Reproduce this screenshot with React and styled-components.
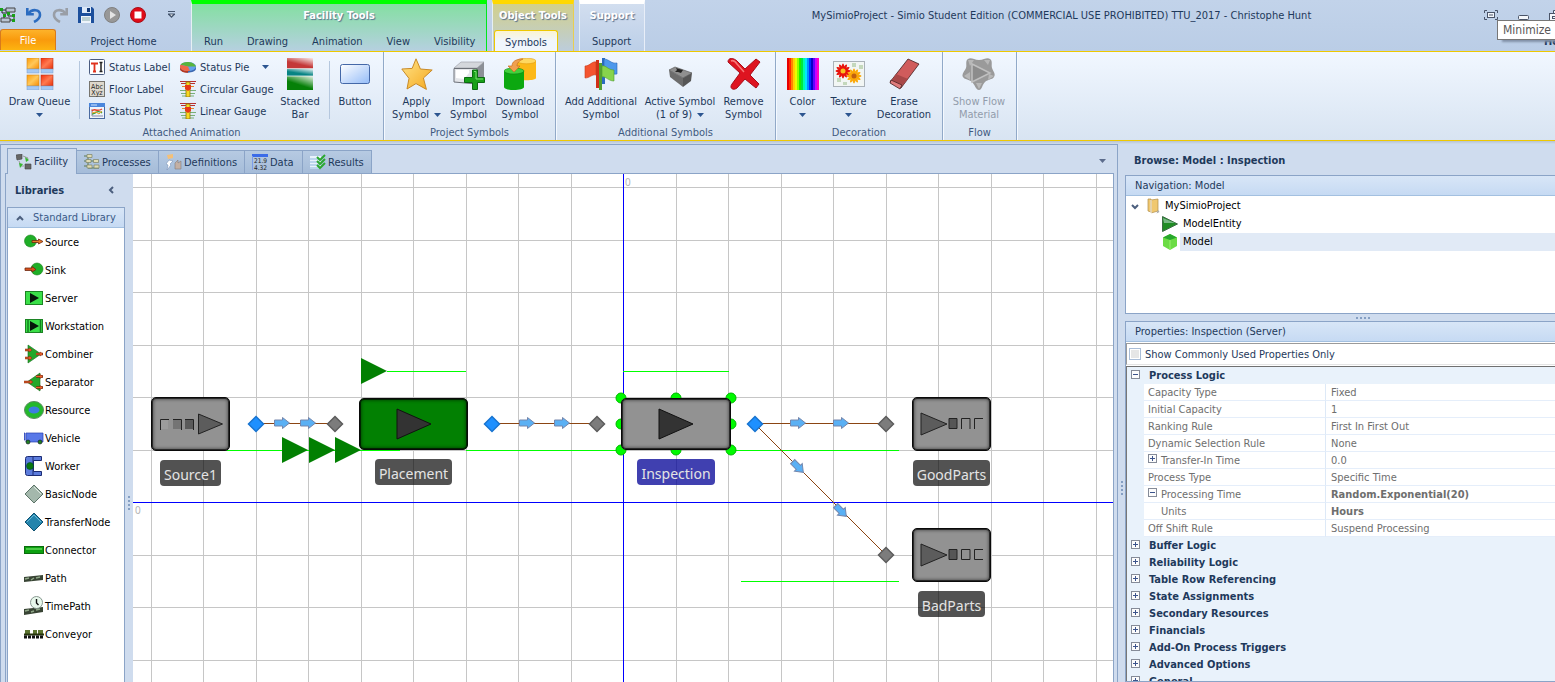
import React from 'react';
import styled, { createGlobalStyle, css } from 'styled-components';

const GlobalStyle = createGlobalStyle`
  * { box-sizing: border-box; }
  body {
    margin: 0;
    font: 11px/13px "DejaVu Sans Condensed", "DejaVu Sans", sans-serif;
    color: #1e395b;
    background: #cfdcee;
  }
  button, input { font: inherit; color: inherit; }
  button { border: 0; padding: 0; background: none; cursor: pointer; white-space: nowrap; }
  svg { display: block; flex: none; }
`;

const Window = styled.div`
  height: 100vh;
  display: flex;
  flex-direction: column;
  overflow: hidden;
  background: #cfdcee;
`;

/* ---------- Title bar and ribbon tabs ---------- */

const Header = styled.header`
  display: flex;
  flex: none;
  height: 52px;
  background: linear-gradient(#c2d3ea, #bacde6);
  border-bottom: 1px solid #eec800;
`;
const HomeBlock = styled.div`
  width: 191px;
  flex: none;
  display: flex;
  flex-direction: column;
`;
const QuickAccess = styled.div`
  display: flex;
  align-items: center;
  height: 30px;
  gap: 10px;
`;
const IconButton = styled.button`
  display: flex;
  align-items: center;
  justify-content: center;
  width: 16px;
  height: 16px;
`;
const MoreButton = styled(IconButton)`
  margin-left: 7px;
`;
const TabRow = styled.nav`
  display: flex;
  height: 22px;
  align-items: stretch;
`;
const RibbonTab = styled.button`
  padding: 4px 12px 0;
  color: #1e395b;
  margin-bottom: 1px;
`;
const FileTab = styled(RibbonTab)`
  width: 56px;
  padding: 1px 0 0;
  color: #fff;
  border: 1px solid #d87a1c;
  border-bottom: 0;
  border-radius: 3px 3px 0 0;
  background: linear-gradient(#fdb32a, #f99a0c 50%, #fdb410);
`;
const HomeTab = styled(RibbonTab)`
  flex: 1;
`;
const ActiveTab = styled(RibbonTab)`
  padding: 3px 10px 0;
  margin: 0 0 0 1px;
  border: 1px solid #eec800;
  border-bottom: 0;
  border-radius: 3px 3px 0 0;
  background: linear-gradient(#fbf4d0, #f0f6fd 50%);
`;
const ContextGroup = styled.div`
  flex: none;
  display: flex;
  flex-direction: column;
  margin-right: 5px;
  border-top: 4px solid ${(p) => p.$accent};
  border-left: 1px solid #e6f0f4;
  border-right: 1px solid ${(p) => p.$edge};
  background: linear-gradient(${(p) => p.$from}, ${(p) => p.$to});
  width: ${(p) => p.$width}px;
`;
const ContextTitle = styled.div`
  height: 26px;
  padding-top: 5px;
  text-align: center;
  font-weight: bold;
  color: #fff;
  text-shadow: 1px 1px 1px #56708e;
  white-space: nowrap;
`;
const WindowTitle = styled.h1`
  flex: 1;
  margin: 9px 0 0;
  font-size: 11px;
  font-weight: normal;
  text-align: center;
  white-space: nowrap;
  overflow: hidden;
`;
const Controls = styled.div`
  flex: none;
  position: relative;
  width: 82px;
  overflow: hidden;
`;
const ControlRow = styled.div`
  display: flex;
  align-items: center;
  gap: 17px;
  width: 96px;
  padding: 7px 0 0 10px;
`;
const Tooltip = styled.div`
  position: absolute;
  left: 24px;
  top: 20px;
  width: 70px;
  height: 20px;
  padding: 3px 5px;
  font-size: 12px;
  background: #fff;
  color: #575757;
  border: 1px solid #767676;
  box-shadow: 4px 3px 2px -1px #8291a8;
`;
const HelpTab = styled.button`
  position: absolute;
  left: 71px;
  top: 35px;
  font-weight: bold;
`;

/* ---------- Ribbon ---------- */

const Ribbon = styled.section`
  display: flex;
  flex: none;
  height: 89px;
  background: linear-gradient(#f1f7ff, #d8e4f2);
  border-bottom: 1px solid #eec800;
`;
const RibbonGroup = styled.div`
  display: flex;
  flex-direction: column;
  flex: none;
  width: ${(p) => p.$width}px;
  border-right: 1px solid #91a9c8;
  box-shadow: 1px 0 #f4f9ff;
`;
const GroupBody = styled.div`
  display: flex;
  height: 74px;
  padding: 6px 0 0 ${(p) => p.$indent || 0}px;
`;
const GroupLabel = styled.div`
  text-align: center;
  color: #3f5a80;
`;
const LargeButton = styled.button`
  display: flex;
  flex-direction: column;
  align-items: center;
  width: ${(p) => p.$width}px;
  color: ${(p) => (p.disabled ? '#929cab' : '#1e395b')};
  & > svg { margin-bottom: 5px; }
  & > span { display: flex; align-items: center; gap: 5px; height: 13px; }
`;
const GroupDivider = styled.div`
  width: 1px;
  height: 58px;
  margin-top: 3px;
  background: #b5c7de;
`;
const SmallColumn = styled.div`
  display: flex;
  flex-direction: column;
  width: ${(p) => p.$width}px;
  padding: 0 0 0 ${(p) => p.$indent}px;
  margin-top: -2px;
`;
const SmallButton = styled.button`
  display: flex;
  align-items: center;
  gap: 4px;
  height: 22px;
  color: #1e395b;
  & > svg:nth-of-type(2) { margin-left: 9px; }
`;

/* ---------- Workspace ---------- */

const Workspace = styled.main`
  display: flex;
  flex: 1;
  min-height: 0;
  padding-top: 3px;
  background: linear-gradient(#b9c3cc, #cfdcee 3px);
`;
const DocumentArea = styled.section`
  flex: 1;
  min-width: 0;
  display: flex;
  flex-direction: column;
  padding: 3px 3px 0 4px;
  border: 1px solid #8ba4c7;
  border-bottom: 0;
`;
const DocTabs = styled.div`
  display: flex;
  align-items: flex-end;
  height: 26px;
  padding-left: 2px;
  border-bottom: 1px solid #8ba4c7;
`;
const DocTab = styled.button`
  display: flex;
  align-items: center;
  gap: 2px;
  width: ${(p) => p.$width}px;
  height: 23px;
  padding: 0 0 0 7px;
  border: 1px solid #8ba4c7;
  border-left-width: 0;
  border-bottom: 0;
  background: linear-gradient(#b6cae2, #a5bcd9);
  ${(p) => p.$active && css`
    height: 26px;
    padding-left: 8px;
    margin-bottom: -1px;
    border-left-width: 1px;
    background: #cfdcee;
  `}
`;
const TabMenu = styled(IconButton)`
  margin: 0 4px 4px auto;
`;
const DocBody = styled.div`
  flex: 1;
  display: flex;
  min-height: 0;
  border-left: 1px solid #8ba4c7;
  border-right: 1px solid #8ba4c7;
`;
const Libraries = styled.aside`
  width: 127px;
  flex: none;
  display: flex;
`;
const LibraryColumn = styled.div`
  width: 119px;
  display: flex;
  flex-direction: column;
  padding-left: 1px;
`;
const LibraryTitle = styled.h2`
  display: flex;
  justify-content: space-between;
  align-items: center;
  height: 33px;
  margin: 0;
  padding: 0 10px 1px 8px;
  font-size: 11px;
`;
const LibraryPanel = styled.div`
  flex: 1;
  border: 1px solid #8ba4c7;
  border-bottom: 0;
  background: #fff;
  overflow: hidden;
`;
const LibraryHeader = styled.button`
  display: flex;
  align-items: center;
  gap: 9px;
  width: 100%;
  height: 20px;
  padding-left: 8px;
  color: #3a5a88;
  border-bottom: 1px solid #a3c0e0;
  background: linear-gradient(#d8e6f7, #c6daf3);
`;
const LibraryItem = styled.button`
  display: flex;
  align-items: center;
  gap: 1px;
  width: 100%;
  height: 28px;
  padding-left: 16px;
  color: #000;
`;
const Splitter = styled.div`
  flex: 1;
  display: flex;
  flex-direction: ${(p) => (p.$row ? 'row' : 'column')};
  align-items: center;
  justify-content: center;
  gap: 2px;
  padding: ${(p) => (p.$row ? '0 0 0 45px' : '150px 0 0 0')};
  & > i { width: 2px; height: 2px; background: #859fc3; }
`;
const Dots = ({ row }) => (
  <Splitter $row={row}><i /><i /><i /><i /></Splitter>
);

/* ---------- Facility canvas ---------- */

const Canvas = styled.div`
  flex: 1;
  min-width: 0;
  position: relative;
  overflow: hidden;
  background: #fff;
  & > svg { position: absolute; left: 0; top: 0; width: 100%; height: 100%; }
`;
const Node = styled.div`
  position: absolute;
  left: ${(p) => p.$x}px;
  top: ${(p) => p.$y}px;
  width: ${(p) => p.$w}px;
  display: flex;
  flex-direction: column;
  align-items: center;
  gap: 9px;
`;
const NodeBox = styled.div`
  display: flex;
  align-items: center;
  justify-content: center;
  width: 100%;
  height: ${(p) => p.$h}px;
  border: 1px solid #0a0a0a;
  border-radius: 5px;
  background: ${(p) => p.$fill};
  box-shadow: inset 0 0 0 1px rgba(0, 0, 0, 0.6), inset 0 0 3px 2px rgba(0, 0, 0, 0.35);
`;
const NodeLabel = styled.div`
  height: 26px;
  padding: 0 4px;
  border-radius: 4px;
  font: 14px/29px "Noto Sans", sans-serif;
  color: #e4e4e4;
  background: ${(p) => (p.$selected ? 'rgba(0, 0, 150, 0.75)' : 'rgba(0, 0, 0, 0.68)')};
`;
const AxisMark = styled.span`
  position: absolute;
  left: ${(p) => p.$x}px;
  top: ${(p) => p.$y}px;
  font: 10px/12px "Noto Sans", sans-serif;
  color: #b4b4b4;
`;

/* ---------- Browse pane ---------- */

const BrowsePane = styled.aside`
  flex: none;
  width: 437px;
  display: flex;
`;
const GripColumn = styled.div`
  width: 7px;
  display: flex;
  flex-direction: column;
`;
const BrowseColumn = styled.div`
  flex: 1;
  min-width: 0;
  display: flex;
  flex-direction: column;
`;
const BrowseTitle = styled.h2`
  flex: none;
  height: 31px;
  margin: 0;
  padding: 10px 0 0 9px;
  font-size: 11px;
  line-height: 13px;
`;
const Panel = styled.section`
  flex: ${(p) => (p.$grow ? '1' : 'none')};
  height: ${(p) => (p.$height ? p.$height + 'px' : 'auto')};
  min-height: 0;
  display: flex;
  flex-direction: column;
  border: 1px solid #8ba4c7;
  border-right: 0;
  background: #fff;
  overflow: hidden;
`;
const PanelTitle = styled.h3`
  flex: none;
  height: 20px;
  margin: 0;
  padding: 0 0 0 9px;
  font-size: 11px;
  font-weight: normal;
  line-height: 19px;
  border-bottom: 1px solid #a3c0e0;
  background: linear-gradient(#d8e6f7, #c6daf3);
`;
const HorizontalGrip = styled.div`
  flex: none;
  height: 7px;
  display: flex;
`;
const Tree = styled.ul`
  margin: 0;
  padding: 1px 0 0;
  list-style: none;
`;
const TreeItem = styled.li`
  display: flex;
  align-items: center;
  height: 18px;
  padding-left: ${(p) => p.$indent}px;
  color: #000;
  & > svg + svg { margin-left: 8px; }
`;
const TreeLabel = styled.span`
  flex: 1;
  margin-left: 2px;
  padding-left: 3px;
  line-height: 18px;
  background: ${(p) => (p.$selected ? '#e1eaf6' : 'none')};
`;
const CommonRow = styled.label`
  flex: none;
  display: flex;
  align-items: center;
  gap: 4px;
  height: 22px;
  margin-top: 1px;
  padding-left: 2px;
  border: 1px solid #9a9a9a;
  border-right: 0;
  border-bottom-color: #e4e4e4;
`;
const CheckBox = styled.input`
  appearance: none;
  width: 12px;
  height: 12px;
  margin: 0;
  border: 1px solid #a9bdd8;
  background: #e6e6e6;
  box-shadow: inset 0 0 0 1px #fff;
`;
const PropertyTable = styled.table`
  width: 100%;
  margin-top: 1px;
  border-spacing: 0;
  table-layout: fixed;
  border-top: 1px solid #707070;
  border-left: 1px solid #777;
  background: #e9f2fb;
  & tr { height: 17px; }
  & th, & td { padding: 0; text-align: left; height: 17px; white-space: nowrap; }
`;
const GutterColumn = styled.col`
  width: 17px;
`;
const NameColumn = styled.col`
  width: 181px;
`;
const GutterCell = styled.td`
  vertical-align: top;
`;
const CategoryCell = styled.th`
  font-weight: bold;
  && { padding-left: 5px; }
`;
const NameCell = styled.th`
  font-weight: normal;
  color: #6e6e6e;
  background: #fff;
  border-bottom: 1px solid #e5eefa;
  && { padding-left: ${(p) => (p.$level === 1 ? 17 : 4)}px; }
  & > div { display: flex; align-items: center; gap: 4px; }
`;
const ValueCell = styled.td`
  color: #6e6e6e;
  background: #fff;
  border-left: 1px solid #dde9f7;
  border-bottom: 1px solid #e5eefa;
  font-weight: ${(p) => (p.$bold ? 'bold' : 'normal')};
  && { padding-left: 5px; }
`;
const Expander = styled.button`
  display: block;
  width: 9px;
  height: 9px;
  margin: ${(p) => (p.$inline ? '0 0 3px' : '3px 0 0 4px')};
`;

/* ---------- Icons ---------- */

const Caret = ({ color = '#2c5590' }) => (
  <svg width="7" height="4" viewBox="0 0 7 4"><path d="M0 0h7L3.500 4z" fill={color} /></svg>
);
const Chevron = ({ d }) => (
  <svg width="8" height="8" viewBox="0 0 8 8"><path d={d} fill="none" stroke="#4c5f7e" strokeWidth="2" /></svg>
);

const ModelIcon = () => (
  <svg width="16" height="16" viewBox="0 0 16 16">
    <path d="M6 1h9v4H6zM1 11h9v4H1z" fill="#b8c4d4" stroke="#444" />
    <path d="M2 3h4M2 3v3h6v3h6v4h-4M4 8v3" fill="none" stroke="#222" />
    <path d="M0 1h3v3H0zM7 5h3v3H7zM12 7h3v3h-3zM12 12h3v3h-3zM3 7h3v3H3z" fill="#18a018" />
  </svg>
);
const Undo = ({ color, flip }) => (
  <svg width="16" height="16" viewBox="0 0 16 16">
    <g transform={flip ? 'translate(16 0) scale(-1 1)' : undefined} fill="none" stroke={color} strokeWidth="2.600">
      <path d="M1.300 1v6.200h6.500" />
      <path d="M2 7C6 1.500 14 2 14 8c0 3.500-3 5.500-6 7" />
    </g>
  </svg>
);
const SaveIcon = () => (
  <svg width="16" height="16" viewBox="0 0 16 16">
    <path d="M0 0h14l2 2v14H0z" fill="#1c4f9c" />
    <path d="M4 0h9v6H4z" fill="#dce8f8" /><path d="M9 1h3v4H9z" fill="#123a78" />
    <path d="M3 9h10v7H3z" fill="#eef4fb" /><path d="M4 11h8M4 13h8" stroke="#8aa" />
  </svg>
);
const PlayIcon = () => (
  <svg width="16" height="16" viewBox="0 0 16 16">
    <circle cx="8" cy="8" r="7.500" fill="#989898" stroke="#808080" /><path d="M6 4l6 4-6 4z" fill="#e4e4e4" />
  </svg>
);
const StopIcon = () => (
  <svg width="16" height="16" viewBox="0 0 16 16">
    <circle cx="8" cy="8" r="7.500" fill="#e00c18" stroke="#a81018" /><rect x="4.500" y="4.500" width="7" height="7" fill="#fff" />
  </svg>
);
const MoreIcon = () => (
  <svg width="7" height="7" viewBox="0 0 7 7"><path d="M0 .5h7" stroke="#45566e" /><path d="M0 2.500h7v1L3.500 7 0 3.500z" fill="#45566e" /><path d="M2 3.500h3L3.500 5z" fill="#fff" /></svg>
);
const RestoreIcon = () => (
  <svg width="14" height="10" viewBox="0 0 14 10" fill="none" stroke="#4a5468">
    <path d="M3 .5H.5V3M11 .5h2.500V3M3 9.500H.5V7M11 9.500h2.500V7" /><rect x="3.500" y="2.500" width="7" height="5" fill="#f4f7fb" /><path d="M5 5h4" />
  </svg>
);
const MinimizeIcon = () => (
  <svg width="12" height="10" viewBox="0 0 12 10"><rect x=".5" y="5.500" width="10" height="4" rx="1" fill="#f4f7fb" stroke="#4a5468" /></svg>
);
const MaximizeIcon = () => (
  <svg width="16" height="11" viewBox="0 0 16 11" fill="#f4f7fb" stroke="#4a5468"><path d="M4.500 3V.5h9v7H11" /><rect x=".5" y="3.500" width="10" height="7" /><rect x="3.500" y="6.500" width="4" height="2" /></svg>
);

const QueueIcon = () => (
  <svg width="32" height="32" viewBox="0 0 32 32">
    <defs>
      <linearGradient id="qa" x1="0" y1="0" x2="1" y2="1"><stop stopColor="#ff9c08" /><stop offset=".5" stopColor="#ffc85a" /><stop offset="1" stopColor="#f88a00" /></linearGradient>
      <linearGradient id="qb" x1="0" y1="0" x2="1" y2="1"><stop stopColor="#f4300c" /><stop offset=".5" stopColor="#ff7a50" /><stop offset="1" stopColor="#e83008" /></linearGradient>
    </defs>
    {[0, 17].map((y) => [0, 14].map((x) => (
      <g key={`${x}-${y}`}>
        <rect x={x + 3} y={y} width="12" height="11" fill={x ? 'url(#qb)' : 'url(#qa)'} stroke={x ? '#b83418' : '#d08820'} strokeWidth=".6" />
        <rect x={x + 3} y={y + 11} width="12" height="4" fill="#a4c8f4" stroke="#7a9cc8" strokeWidth=".5" />
      </g>
    )))}
  </svg>
);
const StatusLabelIcon = () => (
  <svg width="16" height="16" viewBox="0 0 16 16">
    <rect x=".5" y=".5" width="15" height="15" rx="1" fill="#fff" stroke="#4a5c80" />
    <path d="M2 4.500h7M5.500 4v8M4 12.500h3" stroke="#e0321c" strokeWidth="1.800" />
    <path d="M12 4v8M10.500 3.500h3M10.500 12.500h3" stroke="#222" strokeWidth="1.500" />
  </svg>
);
const FloorLabelIcon = () => (
  <svg width="16" height="16" viewBox="0 0 16 16">
    <rect x=".5" y=".5" width="15" height="15" fill="#ddd8cc" stroke="#77756e" />
    <text x="8" y="7.500" fontSize="7" textAnchor="middle" fill="#222">Abc</text>
    <text x="8" y="14" fontSize="7" textAnchor="middle" fill="#222">Xyz</text>
  </svg>
);
const StatusPlotIcon = () => (
  <svg width="16" height="16" viewBox="0 0 16 16">
    <rect x=".5" y=".5" width="15" height="15" fill="#eef4fc" stroke="#4a6aa0" />
    <path d="M0 0h16v4H0z" fill="#4a86dc" /><path d="M2 2h6" stroke="#d4e8ff" />
    <path d="M3 6v7h11" fill="none" stroke="#88a" />
    <path d="M3 8c3-4 4 2 10-2" fill="none" stroke="#e8402c" strokeWidth="1.500" />
    <path d="M3 11c4 0 5-5 10-1" fill="none" stroke="#3aa03a" strokeWidth="1.500" />
    <path d="M3 10l4-1 3 2 3-3" fill="none" stroke="#f0a020" />
  </svg>
);
const StatusPieIcon = () => (
  <svg width="16" height="16" viewBox="0 0 16 16">
    <path d="M0 7.500v2c0 5.500 16 5.500 16 0v-2z" fill="#3c68b0" />
    <path d="M0 7.500v2c0 3 4 4.300 8 4.200v-3z" fill="#b83820" />
    <ellipse cx="8" cy="7.500" rx="8" ry="4.500" fill="#62a0ec" />
    <path d="M8 7.500L.6 5.800C3 1.900 13.500 2 16 7.500z" fill="#58b43c" />
    <path d="M8 7.500l2 4.400C4 12.500 0 10.500 0 7.500c0-.7.200-1.200.6-1.700z" fill="#f06848" />
  </svg>
);
const GaugeIcon = () => (
  <svg width="16" height="16" viewBox="0 0 16 16">
    <path d="M0 .5h16M1 2.500h14" stroke="#b83030" /><path d="M2 5.500h12" stroke="#e08828" />
    <path d="M0 9.500h16M1 12.500h14M2 15h12" stroke="#78b078" />
    <rect x="6" y="1" width="4" height="15" fill="#f8d820" stroke="#8a7410" strokeWidth=".8" />
    <path d="M5 4h6v4L8 10 5 8z" fill="#e83818" />
  </svg>
);
const StackedIcon = () => (
  <svg width="26" height="32" viewBox="0 0 26 32">
    <defs><linearGradient id="sb" x1=".4" y1="1" x2="1" y2="0"><stop offset=".3" stopColor="#fff" stopOpacity="0" /><stop offset="1" stopColor="#fff" stopOpacity=".9" /></linearGradient></defs>
    <path d="M0 0h26v11H0z" fill="#c43838" /><path d="M0 11h26v7H0z" fill="#088484" /><path d="M0 18h26v14H0z" fill="#068008" />
    <path d="M0 0h26v10H0z" fill="url(#sb)" /><path d="M0 11h26v7H0z" fill="url(#sb)" /><path d="M0 18h26v14H0z" fill="url(#sb)" />
    <path d="M0 10.500h26M0 18h26" stroke="#e4ecec" strokeWidth=".8" />
  </svg>
);
const ButtonIcon = () => (
  <svg width="32" height="32" viewBox="0 0 32 32">
    <defs><linearGradient id="bt" x1="0" y1="0" x2="1" y2="1"><stop stopColor="#fff" /><stop offset="1" stopColor="#94bcf8" /></linearGradient></defs>
    <rect x="1.500" y="6.500" width="29" height="19" rx="2" fill="url(#bt)" stroke="#4468a8" />
  </svg>
);
const StarIcon = () => (
  <svg width="32" height="32" viewBox="0 0 32 32">
    <defs><linearGradient id="st" x1="0" y1="0" x2="1" y2="1"><stop stopColor="#ffe48a" /><stop offset="1" stopColor="#f5a81c" /></linearGradient></defs>
    <path d="M15 .8l4.400 10.200 11.800 1-8.800 8 3 11.400-10.400-5.800-9 5.400 2-10.600L.8 11l10.400-.6z" fill="url(#st)" stroke="#c88a28" />
  </svg>
);
const ImportIcon = () => (
  <svg width="32" height="32" viewBox="0 0 32 32">
    <path d="M1 10l7-6h23l-7 6z" fill="#d4d7dc" stroke="#a0a4ac" strokeWidth=".7" />
    <path d="M24 10l7-6v15l-7 7z" fill="#8c9096" /><path d="M1 10.500h23V26L1 24z" fill="#e4e6ea" stroke="#6c7078" />
    <path d="M3 12h13v3l-5 6-8-1z" fill="#fff" />
    <path d="M19.500 12h5v7.500h7v5h-7v7h-5v-7h-8v-5h8z" fill="#18a018" stroke="#0a6c10" /><path d="M21 13.500h2V21h7" fill="none" stroke="#7be070" />
  </svg>
);
const DownloadIcon = () => (
  <svg width="32" height="32" viewBox="0 0 32 32">
    <path d="M13 3v17c0 3 19 3 19 0V3z" fill="#fcb818" /><ellipse cx="22.500" cy="3" rx="9.500" ry="2.800" fill="#ffd860" stroke="#e09c10" strokeWidth=".6" />
    <path d="M0 13v16c0 4 20 4 20 0V13z" fill="#0ca810" /><ellipse cx="10" cy="13" rx="10" ry="3" fill="#42d03c" stroke="#0c8410" strokeWidth=".6" />
    <path d="M19 1C11 1 8 4 8 8H4l6 6 6-6h-3c0-3 2-5 6-7z" fill="#f0a050" stroke="#c87020" strokeWidth=".7" />
  </svg>
);
const FlagsIcon = () => (
  <svg width="34" height="32" viewBox="0 0 34 32">
    <path d="M18 0h3v26h-3z" fill="#2c6cc0" /><path d="M20 1c5 0 7 5 13 4v11c-6 1-8-3-13-4z" fill="#4c98ec" stroke="#2c64b4" strokeWidth=".6" />
    <path d="M12 2h3v28h-3z" fill="#d03018" /><path d="M12 4C8 3 6 8 1 8v12c5 0 7-4 11-3z" fill="#f45430" stroke="#c83c1c" strokeWidth=".6" />
    <path d="M15 5h3v27h-3z" fill="#54a030" /><path d="M18 8c4-1 6 4 12 4v11c-6 0-8-5-12-4z" fill="#88d44c" stroke="#4c9c2c" strokeWidth=".6" />
  </svg>
);
const BlockIcon = () => (
  <svg width="32" height="32" viewBox="0 0 32 32">
    <path d="M5 12l6-3 17 6-9 5z" fill="#909090" stroke="#5c5c5c" strokeWidth=".7" />
    <path d="M5 12l14 8v9L6 19z" fill="#6c6c6c" /><path d="M19 20l9-5-1 8-8 6z" fill="#565656" />
    <path d="M11 14l2-2-1-2 3 1 4 1-2 3-3-1z" fill="#242424" />
  </svg>
);
const RemoveIcon = () => (
  <svg width="34" height="32" viewBox="0 0 34 32">
    <path d="M1 4C1-1 7 0 10 3l8 8L29 1l4 3-10 13 9 9-3 4-11-9-8 9c-4 3-8 0-5-4l8-11z" fill="#de1420" stroke="#a80c18" />
    <path d="M4 3c2-1 4 0 6 3l7 8" fill="none" stroke="#f87878" strokeWidth="1.500" />
  </svg>
);
const ColorIcon = () => (
  <svg width="32" height="32" viewBox="0 0 32 32">
    {['#e80000', '#ff2a00', '#ff8400', '#ffd000', '#e8ff00', '#8cff00', '#18f000', '#00e840', '#00ffa8', '#00e8ff', '#0090ff', '#0030ff', '#0800c8', '#6400ff', '#c800ff', '#ff00c0'].map((c, i) => (
      <rect key={c} x={i * 2} width="2" height="32" fill={c} />
    ))}
  </svg>
);
const Flower = ({ x, y, r, fill, core }) => (
  <g transform={`translate(${x} ${y})`}>
    {[0, 30, 60, 90, 120, 150].map((a) => (
      <ellipse key={a} rx={r} ry="1.700" fill={fill} transform={`rotate(${a})`} />
    ))}
    <circle r="2.500" fill={core} />
  </g>
);
const TextureIcon = () => (
  <svg width="32" height="32" viewBox="0 0 32 32">
    <rect x=".5" y="3.500" width="31" height="25" fill="#f2f6f4" stroke="#aab2b8" />
    <path d="M19 5h4v4h-4zM26 7h4v4h-4zM4 20h4v4H4zM10 24h4v3h-4z" fill="#c4d8bc" />
    <Flower x={10} y={13} r={7.500} fill="#e8140c" core="#f8c020" />
    <Flower x={21} y={18} r={7.500} fill="#fca808" core="#c06010" />
  </svg>
);
const EraserIcon = () => (
  <svg width="32" height="32" viewBox="0 0 32 32">
    <path d="M20 1l11 5-18 24-11-6z" fill="#d05c5c" stroke="#442020" strokeWidth=".8" />
    <path d="M8 16l12 5-5 6-11-5z" fill="#a84848" /><path d="M3 22l11 5-2 4-10-6z" fill="#e07c7c" stroke="#442020" strokeWidth=".8" />
  </svg>
);
const FlowIcon = () => (
  <svg width="34" height="32" viewBox="0 0 34 32">
    <path d="M6 1c3-2 6 1 11 1s8-3 11-1 1 6 2 9 4 6 2 9-6 2-9 5-3 8-6 8-4-5-7-8-7-2-9-5 2-6 3-9-1-7 2-9z" fill="#9a9a9a" />
    <path d="M6 2h6l-4 6zM28 2h-6l4 5zM32 18l-6 4 1-6zM17 31l-3-6h6zM2 18l6 4V14z" fill="#b8b8b8" />
    <path d="M10 6l18 9-18 9z" fill="#8c8c8c" stroke="#c0c0c0" strokeWidth="1.500" />
  </svg>
);

const FacilityIcon = () => (
  <svg width="16" height="16" viewBox="0 0 16 16">
    <path d="M0 1l6-1v5l-5 1zM9 10h6v5H9z" fill="#666" stroke="#444" strokeWidth=".6" />
    <path d="M7 2l5 2-1 2M3 7l2 5h3" fill="none" stroke="#999" /><path d="M9 3l4 3-3 2zM3 9l4 1-3 4z" fill="#38b830" />
  </svg>
);
const ProcessesIcon = () => (
  <svg width="16" height="16" viewBox="0 0 16 16">
    <path d="M0 2h8M0 7h14M4 2v12h11M0 12h4" fill="none" stroke="#5c7850" />
    <path d="M3 .5h5v3H3zM2 5.500h5v3H2zM9.500 5.500h5v3h-5zM3 11h5v3H3zM10 11h5v3h-5z" fill="#e0dcb4" stroke="#7c8468" strokeWidth=".7" />
  </svg>
);
const DefinitionsIcon = () => (
  <svg width="16" height="16" viewBox="0 0 16 16">
    <path d="M1 1l6-1v4l-5 1z" fill="#f4c078" /><path d="M3 6l4 1-3 3 1 1-4 5 1-5-2-1z" fill="#fff" stroke="#7c94b8" strokeWidth=".6" />
    <path d="M9 15V9l3-3v3l3-2v8z" fill="#c4b0a4" stroke="#847c7c" strokeWidth=".6" />
  </svg>
);
const DataIcon = () => (
  <svg width="16" height="16" viewBox="0 0 16 16">
    <path d="M0 0h16v3H0z" fill="#3c6ce8" /><path d="M.5 2v14" stroke="#7c9ce8" />
    <text x="8.500" y="9" fontSize="6.500" textAnchor="middle" fill="#222">21.9</text>
    <text x="8.500" y="15.500" fontSize="6.500" textAnchor="middle" fill="#222">4.32</text>
  </svg>
);
const ResultsIcon = () => (
  <svg width="16" height="16" viewBox="0 0 16 16">
    <path d="M0 2h11v13H0z" fill="#e8f2fc" /><path d="M0 5h10M0 8h10M0 11h10M0 14h10" stroke="#90b8e0" />
    <path d="M7 3l3 3 5-5M7 7l3 3 5-5M7 11l3 3 5-5" fill="none" stroke="#2ca830" strokeWidth="2" />
  </svg>
);

const itemArt = {
  Source: <><circle cx="6.500" cy="9" r="6" fill="#1fae27" stroke="#168018" strokeWidth=".6" /><path d="M8 8.500h6.500V7L19 9.500 14.500 12v-1.500H8z" fill="#e87a28" stroke="#6c2810" strokeWidth=".8" /></>,
  Sink: <><circle cx="13" cy="9" r="6" fill="#1fae27" stroke="#168018" strokeWidth=".6" /><path d="M1 8h7V6.500l4 3L8 12v-1.500H1z" fill="#d8501c" stroke="#6c2810" strokeWidth=".8" /></>,
  Server: <><rect x="1.500" y="3.500" width="17" height="13" fill="#3adf48" stroke="#1c8424" /><path d="M6 5l9 5-9 5z" fill="#06160a" /></>,
  Workstation: <><rect x="1.500" y="3.500" width="17" height="13" fill="#3adf48" stroke="#1c8424" /><path d="M4 4v12M16.500 4v12" stroke="#148020" strokeWidth="1.500" /><path d="M6 5l9 5-9 5z" fill="#06160a" /></>,
  Combiner: <><path d="M4 1l13 9-13 9z" fill="#22a82a" stroke="#186c1c" strokeWidth=".6" /><path d="M1 6h6M1 14h6M12 10h7" stroke="#802c10" strokeWidth="2.500" /><path d="M5 4l3 2-3 2zM5 12l3 2-3 2zM16 8l3 2-3 2z" fill="#e85c28" stroke="#802c10" strokeWidth=".5" /><path d="M1 6h6M1 14h6M12 10h6" stroke="#f0642c" strokeWidth="1.200" /></>,
  Separator: <><path d="M16 1L3 10l13 9z" fill="#22a82a" stroke="#186c1c" strokeWidth=".6" /><path d="M0 10h8M12 4.500h7M12 15.500h7" stroke="#802c10" strokeWidth="2.500" /><path d="M16 2.500l3 2-3 2zM16 13.500l3 2-3 2zM6 8l3 2-3 2z" fill="#e85c28" stroke="#802c10" strokeWidth=".5" /><path d="M0 10h7M12 4.500h6M12 15.500h6" stroke="#f0642c" strokeWidth="1.200" /></>,
  Resource: <><ellipse cx="10" cy="10" rx="9.500" ry="8.500" fill="#24b82c" stroke="#5c8c60" /><ellipse cx="10" cy="10" rx="5.500" ry="3.500" fill="#3c7ce0" /></>,
  Vehicle: <><path d="M0 5h1v7H0zM2 5h17v9H2z" fill="#5878e8" stroke="#2840b0" strokeWidth=".7" /><circle cx="4" cy="14" r="2" fill="#208020" stroke="#112" strokeWidth=".6" /><circle cx="16" cy="14" r="2" fill="#208020" stroke="#112" strokeWidth=".6" /></>,
  Worker: <><path d="M1.500 2.500q0-2 2-2h14v4h-8v11h8v4h-14q-2 0-2-2z" fill="#5c7cdc" stroke="#1c2c74" /><path d="M9 1v18" stroke="#1c2c74" /><circle cx="6" cy="10" r="3.500" fill="#0a780e" stroke="#043" strokeWidth=".6" /></>,
  BasicNode: <><path d="M10 1l9 9-9 9-9-9z" fill="#a4b8ac" stroke="#5c7468" /><path d="M10 3l7 7" stroke="#dce8e0" /></>,
  TransferNode: <><path d="M10 1l9 9-9 9-9-9z" fill="#2484ac" stroke="#0c5070" /><path d="M3 10l7-7 7 7" fill="none" stroke="#68b8d4" /></>,
  Connector: <><rect x=".5" y="6.500" width="19" height="7" fill="#0ca010" stroke="#0a6c0c" /><path d="M2 9h16" stroke="#60d858" strokeWidth="1.500" /></>,
  Path: <><path d="M0 9l19-2v5L0 14z" fill="#384434" /><path d="M1 11l4-1M7 12l3-2M12 10l4-1" stroke="#90a888" strokeWidth="1.500" /></>,
  TimePath: <><path d="M0 13l19-2v5L0 19z" fill="#384434" /><path d="M1 15l4-1M7 16l3-1M12 14l4-1" stroke="#90a888" strokeWidth="1.500" /><circle cx="12.500" cy="6.500" r="6" fill="#e8f8ec" stroke="#889890" /><path d="M12.500 3v4l2 2" fill="none" stroke="#111" strokeWidth="1.400" /></>,
  Conveyor: <><path d="M1 6h5v5H1zM9 6h4v5H9zM14 6h5v5h-5z" fill="#5c7430" /><path d="M0 10.500h20" stroke="#26340c" strokeWidth="2" /><path d="M0 13h20" stroke="#111" strokeWidth="3" strokeDasharray="3 1" /></>,
};
const ItemIcon = ({ name }) => <svg width="20" height="20" viewBox="0 0 20 20">{itemArt[name]}</svg>;

const FolderIcon = () => (
  <svg width="13" height="16" viewBox="0 0 13 16">
    <path d="M1 1h3v13l-3-1zM4 2l7-1v12l-7 2z" fill="#f0c870" stroke="#b08c48" strokeWidth=".7" /><path d="M4 2v14" stroke="#fff" /><path d="M11 12l1.500 2-3 1.500z" fill="#aaa" />
  </svg>
);
const EntityIcon = () => (
  <svg width="16" height="16" viewBox="0 0 16 16"><path d="M.5 .5L15.500 8 .5 15.500z" fill="#208c24" stroke="#3c6c44" /><path d="M1 2l12 5H2z" fill="#78b884" /></svg>
);
const CubeIcon = () => (
  <svg width="16" height="16" viewBox="0 0 16 16"><path d="M8 0l7 3.500v8.500L8 16l-7-4V3.500z" fill="#6cdc44" /><path d="M8 0l7 3.500L8 6 1 3.500z" fill="#28a82c" /><path d="M8 6v10" stroke="#98f070" /></svg>
);
const SignIcon = ({ open }) => (
  <svg width="9" height="9" viewBox="0 0 9 9"><rect x=".5" y=".5" width="8" height="8" fill="#fcfcfc" stroke="#858b98" /><path d={open ? 'M2 4.500h5' : 'M2 4.500h5M4.500 2v5'} stroke="#3c548c" /></svg>
);

/* ---------- Data ---------- */

const libraryItems = ['Source', 'Sink', 'Server', 'Workstation', 'Combiner', 'Separator', 'Resource', 'Vehicle', 'Worker', 'BasicNode', 'TransferNode', 'Connector', 'Path', 'TimePath', 'Conveyor'];

const docTabs = [
  { name: 'Facility', icon: <FacilityIcon />, width: 70, active: true },
  { name: 'Processes', icon: <ProcessesIcon />, width: 82 },
  { name: 'Definitions', icon: <DefinitionsIcon />, width: 86 },
  { name: 'Data', icon: <DataIcon />, width: 58 },
  { name: 'Results', icon: <ResultsIcon />, width: 69 },
];

const processLogic = [
  { name: 'Capacity Type', value: 'Fixed' },
  { name: 'Initial Capacity', value: '1' },
  { name: 'Ranking Rule', value: 'First In First Out' },
  { name: 'Dynamic Selection Rule', value: 'None' },
  { name: 'Transfer-In Time', value: '0.0', sign: 'plus' },
  { name: 'Process Type', value: 'Specific Time' },
  { name: 'Processing Time', value: 'Random.Exponential(20)', sign: 'minus', bold: true },
  { name: 'Units', value: 'Hours', level: 1, bold: true },
  { name: 'Off Shift Rule', value: 'Suspend Processing' },
];
const categories = ['Buffer Logic', 'Reliability Logic', 'Table Row Referencing', 'State Assignments', 'Secondary Resources', 'Financials', 'Add-On Process Triggers', 'Advanced Options', 'General'];

/* ---------- Canvas drawing ---------- */

const Diamond = ({ x, y, blue }) => (
  <path d={`M${x} ${y - 7.500}l7.500 7.500-7.500 7.500-7.500-7.500z`} fill={blue ? '#1e90ff' : '#7c7c7c'} stroke={blue ? '#1874d0' : '#5c5c5c'} strokeWidth="1.500" />
);
const FlowArrow = ({ x, y, angle = 0 }) => (
  <path transform={`translate(${x} ${y}) rotate(${angle})`} d="M-7.500-3H.5V-5.500L7.500 0 .5 5.500V3h-8z" fill="#5ab0f4" stroke="#7486ac" />
);
const Entity = ({ x, y }) => <path d={`M${x} ${y - 13}l26 13-26 13z`} fill="#028002" />;

const handles = [[488, 224], [543, 224], [598, 224], [488, 250], [598, 250], [488, 276], [543, 276], [598, 276]];
const gridPitch = 52.5;
const columns = Array.from({ length: 60 }, (_, i) => Math.floor(18 + i * gridPitch) + 0.5);
const rows = Array.from({ length: 40 }, (_, i) => Math.floor(13.5 + i * gridPitch) + 0.5);

const CanvasArt = () => (
  <svg>
    <g stroke="#c6c6c6" shapeRendering="crispEdges">
      {columns.map((x) => <line key={x} x1={x} x2={x} y1="0" y2="100%" />)}
      {rows.map((y) => <line key={y} y1={y} y2={y} x1="0" x2="100%" />)}
    </g>
    <g stroke="#0000ff" shapeRendering="crispEdges">
      <line x1="490.500" x2="490.500" y1="0" y2="100%" />
      <line x1="0" x2="100%" y1="328.500" y2="328.500" />
    </g>
    <path d="M254 197.500h79M490 197.500h106M93 276.500h174M333 276.500h155M598 276.500h168M608 407.500h158" stroke="#00ff00" shapeRendering="crispEdges" />
    <path d="M123 249.500h79M359 249.500h105M622 249.500h131M622 250l131 131" stroke="#8b4513" fill="none" />
    <Entity x={228} y={197} /><Entity x={149} y={276} /><Entity x={176} y={276} /><Entity x={202} y={276} />
    <FlowArrow x={149} y={249} /><FlowArrow x={175} y={249} />
    <FlowArrow x={394} y={249} /><FlowArrow x={429} y={249} />
    <FlowArrow x={665} y={249} /><FlowArrow x={708} y={249} />
    <FlowArrow x={665} y={293} angle={45} /><FlowArrow x={708} y={337} angle={45} />
    <Diamond x={123} y={250} blue /><Diamond x={202} y={250} />
    <Diamond x={359} y={250} blue /><Diamond x={464} y={250} />
    <Diamond x={622} y={250} blue /><Diamond x={753} y={250} /><Diamond x={753} y={381} />
    {handles.map(([x, y]) => <circle key={`${x}-${y}`} cx={x} cy={y} r="5" fill="#00fa00" stroke="#00b800" />)}
  </svg>
);

const SourceArt = () => (
  <svg width="64" height="22" viewBox="0 0 64 22">
    <path d="M1 6h8v10H1z" fill="#9c9c9c" /><path d="M14 6h8v10h-8z" fill="#747474" /><path d="M26 6h8v10h-8z" fill="#5a5a5a" />
    <path d="M10 6.500H1.500V17M14 6.500h8.500V17M26 6.500h8.500V17" fill="none" stroke="#222" />
    <path d="M39.500 1l24 10-24 10z" fill="#5c5c5c" stroke="#222" />
  </svg>
);
const ServerArt = () => (
  <svg width="36" height="32" viewBox="0 0 36 32"><path d="M1 1l34 15L1 31z" fill="#333" stroke="#111" /></svg>
);
const SinkArt = ({ closed }) => (
  <svg width="64" height="24" viewBox="0 0 64 24" stroke="#222">
    <path d="M1 1l26 11L1 23z" fill="#5c5c5c" /><path d="M29 6.500h8v10h-8z" fill="#565656" />
    <path d={closed ? 'M41.500 6.500h8.500v10h-8.500zM63 6.500h-8.500v10H63' : 'M41.500 17V6.500H50V17M63 6.500h-8.500V17'} fill="none" />
  </svg>
);

const CanvasNode = ({ name, x, y, w, h, fill = '#929292', selected, children }) => (
  <Node $x={x} $y={y} $w={w}>
    <NodeBox $h={h} $fill={fill}>{children}</NodeBox>
    <NodeLabel $selected={selected}>{name}</NodeLabel>
  </Node>
);

/* ---------- Ribbon parts ---------- */

const Large = ({ icon, lines, caret, width, disabled }) => (
  <LargeButton $width={width} disabled={disabled}>
    {icon}
    {lines.map((line, i) => (
      <span key={line}>{line}{caret && i === 1 && <Caret />}</span>
    ))}
    {caret && lines.length === 1 && <span><Caret /></span>}
  </LargeButton>
);
const Group = ({ label, width, indent, children }) => (
  <RibbonGroup $width={width}>
    <GroupBody $indent={indent}>{children}</GroupBody>
    <GroupLabel>{label}</GroupLabel>
  </RibbonGroup>
);

export default function App() {
  return (
    <Window>
      <GlobalStyle />
      <Header>
        <HomeBlock>
          <QuickAccess>
            <IconButton aria-label="Model"><ModelIcon /></IconButton>
            <IconButton aria-label="Undo"><Undo color="#2c6cc0" /></IconButton>
            <IconButton aria-label="Redo"><Undo color="#999ea6" flip /></IconButton>
            <IconButton aria-label="Save"><SaveIcon /></IconButton>
            <IconButton aria-label="Run"><PlayIcon /></IconButton>
            <IconButton aria-label="Stop"><StopIcon /></IconButton>
            <MoreButton aria-label="Customize"><MoreIcon /></MoreButton>
          </QuickAccess>
          <TabRow>
            <FileTab>File</FileTab>
            <HomeTab>Project Home</HomeTab>
          </TabRow>
        </HomeBlock>
        <ContextGroup $accent="#00ff00" $edge="#00e81c" $from="#84dfa2" $to="#b6d0e0" $width={296}>
          <ContextTitle>Facility Tools</ContextTitle>
          <TabRow>
            {['Run', 'Drawing', 'Animation', 'View', 'Visibility'].map((t) => <RibbonTab key={t}>{t}</RibbonTab>)}
          </TabRow>
        </ContextGroup>
        <ContextGroup $accent="#ffd800" $edge="#e8ce50" $from="#d2d08a" $to="#bccddc" $width={82}>
          <ContextTitle>Object Tools</ContextTitle>
          <TabRow><ActiveTab>Symbols</ActiveTab></TabRow>
        </ContextGroup>
        <ContextGroup $accent="#ffffff" $edge="#e8eef8" $from="#d2deef" $to="#bccfe8" $width={66}>
          <ContextTitle>Support</ContextTitle>
          <TabRow><RibbonTab>Support</RibbonTab></TabRow>
        </ContextGroup>
        <WindowTitle>MySimioProject - Simio Student Edition (COMMERCIAL USE PROHIBITED) TTU_2017 - Christophe Hunt</WindowTitle>
        <Controls>
          <ControlRow>
            <IconButton aria-label="Full screen"><RestoreIcon /></IconButton>
            <IconButton aria-label="Minimize"><MinimizeIcon /></IconButton>
            <IconButton aria-label="Maximize"><MaximizeIcon /></IconButton>
          </ControlRow>
          <HelpTab>Help</HelpTab>
          <Tooltip role="tooltip">Minimize</Tooltip>
        </Controls>
      </Header>

      <Ribbon>
        <Group label="Attached Animation" width={384}>
          <Large icon={<QueueIcon />} lines={['Draw Queue']} caret width={79} />
          <GroupDivider />
          <SmallColumn $width={91} $indent={9}>
            <SmallButton><StatusLabelIcon />Status Label</SmallButton>
            <SmallButton><FloorLabelIcon />Floor Label</SmallButton>
            <SmallButton><StatusPlotIcon />Status Plot</SmallButton>
          </SmallColumn>
          <SmallColumn $width={100} $indent={9}>
            <SmallButton><StatusPieIcon />Status Pie<Caret /></SmallButton>
            <SmallButton><GaugeIcon />Circular Gauge</SmallButton>
            <SmallButton><GaugeIcon />Linear Gauge</SmallButton>
          </SmallColumn>
          <Large icon={<StackedIcon />} lines={['Stacked', 'Bar']} width={58} />
          <GroupDivider />
          <Large icon={<ButtonIcon />} lines={['Button']} width={50} />
        </Group>
        <Group label="Project Symbols" width={172} indent={5}>
          <Large icon={<StarIcon />} lines={['Apply', 'Symbol']} caret width={55} />
          <Large icon={<ImportIcon />} lines={['Import', 'Symbol']} width={49} />
          <Large icon={<DownloadIcon />} lines={['Download', 'Symbol']} width={54} />
        </Group>
        <Group label="Additional Symbols" width={220} indent={5}>
          <Large icon={<FlagsIcon />} lines={['Add Additional', 'Symbol']} width={80} />
          <Large icon={<BlockIcon />} lines={['Active Symbol', '(1 of 9)']} caret width={78} />
          <Large icon={<RemoveIcon />} lines={['Remove', 'Symbol']} width={49} />
        </Group>
        <Group label="Decoration" width={167} indent={5}>
          <Large icon={<ColorIcon />} lines={['Color']} caret width={43} />
          <Large icon={<TextureIcon />} lines={['Texture']} caret width={49} />
          <Large icon={<EraserIcon />} lines={['Erase', 'Decoration']} width={62} />
        </Group>
        <Group label="Flow" width={74} indent={2}>
          <Large icon={<FlowIcon />} lines={['Show Flow', 'Material']} width={68} disabled />
        </Group>
      </Ribbon>

      <Workspace>
        <DocumentArea>
          <DocTabs>
            {docTabs.map((t) => (
              <DocTab key={t.name} $width={t.width} $active={t.active}>{t.icon}{t.name}</DocTab>
            ))}
            <TabMenu aria-label="Tab list"><Caret color="#5c6c8c" /></TabMenu>
          </DocTabs>
          <DocBody>
            <Libraries>
              <LibraryColumn>
                <LibraryTitle>Libraries<Chevron d="M6 1L3 4l3 3" /></LibraryTitle>
                <LibraryPanel>
                  <LibraryHeader><Chevron d="M1 6l3-3 3 3" />Standard Library</LibraryHeader>
                  {libraryItems.map((n) => <LibraryItem key={n}><ItemIcon name={n} />{n}</LibraryItem>)}
                </LibraryPanel>
              </LibraryColumn>
              <Dots />
            </Libraries>
            <Canvas>
              <CanvasArt />
              <AxisMark $x={492} $y={2}>0</AxisMark>
              <AxisMark $x={2} $y={330}>0</AxisMark>
              <CanvasNode name="Source1" x={18} y={223} w={79} h={54}><SourceArt /></CanvasNode>
              <CanvasNode name="Placement" x={226} y={224} w={109} h={52} fill="#028002"><ServerArt /></CanvasNode>
              <CanvasNode name="Inspection" x={488} y={224} w={110} h={52} selected><ServerArt /></CanvasNode>
              <CanvasNode name="GoodParts" x={779} y={223} w={79} h={54}><SinkArt /></CanvasNode>
              <CanvasNode name="BadParts" x={779} y={354} w={79} h={54}><SinkArt closed /></CanvasNode>
            </Canvas>
          </DocBody>
        </DocumentArea>

        <BrowsePane>
          <GripColumn><Dots /></GripColumn>
          <BrowseColumn>
            <BrowseTitle>Browse: Model : Inspection</BrowseTitle>
            <Panel $height={139}>
              <PanelTitle>Navigation: Model</PanelTitle>
              <Tree>
                <TreeItem $indent={5}><Chevron d="M1 3l3 3 3-3" /><FolderIcon /><TreeLabel>MySimioProject</TreeLabel></TreeItem>
                <TreeItem $indent={36}><EntityIcon /><TreeLabel>ModelEntity</TreeLabel></TreeItem>
                <TreeItem $indent={36}><CubeIcon /><TreeLabel $selected>Model</TreeLabel></TreeItem>
              </Tree>
            </Panel>
            <HorizontalGrip><Dots row /></HorizontalGrip>
            <Panel $grow>
              <PanelTitle>Properties: Inspection (Server)</PanelTitle>
              <CommonRow><CheckBox type="checkbox" />Show Commonly Used Properties Only</CommonRow>
              <PropertyTable>
                <colgroup><GutterColumn /><NameColumn /><col /></colgroup>
                <tbody>
                  <tr>
                    <GutterCell><Expander aria-label="Collapse"><SignIcon open /></Expander></GutterCell>
                    <CategoryCell colSpan={2}>Process Logic</CategoryCell>
                  </tr>
                  {processLogic.map((p) => (
                    <tr key={p.name}>
                      <GutterCell />
                      <NameCell $level={p.level}>
                        <div>{p.sign && <Expander $inline aria-label="Toggle"><SignIcon open={p.sign === 'minus'} /></Expander>}{p.name}</div>
                      </NameCell>
                      <ValueCell $bold={p.bold}>{p.value}</ValueCell>
                    </tr>
                  ))}
                  {categories.map((c) => (
                    <tr key={c}>
                      <GutterCell><Expander aria-label="Expand"><SignIcon /></Expander></GutterCell>
                      <CategoryCell colSpan={2}>{c}</CategoryCell>
                    </tr>
                  ))}
                </tbody>
              </PropertyTable>
            </Panel>
          </BrowseColumn>
        </BrowsePane>
      </Workspace>
    </Window>
  );
}
